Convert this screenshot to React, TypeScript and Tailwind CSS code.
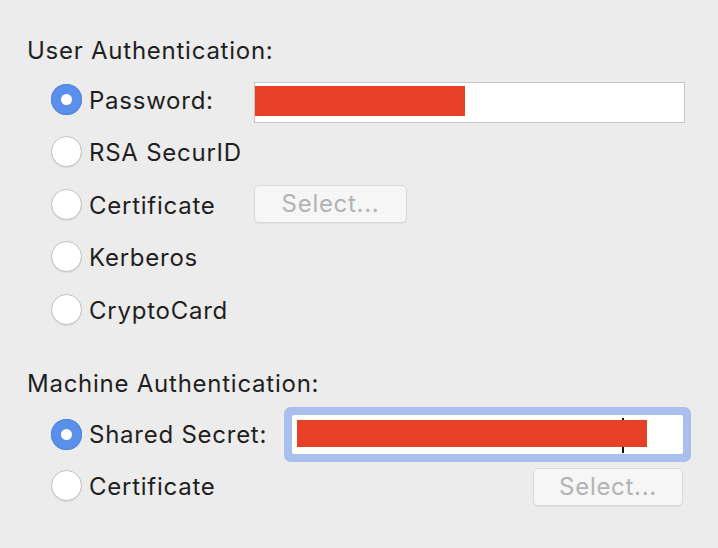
const font = { fontFamily: 'Inter, "Liberation Sans", sans-serif' };

function Radio({ checked }: { checked?: boolean }) {
  if (checked) {
    return (
      <div className="w-[31px] h-[31px] shrink-0 rounded-full bg-[#5b90ea] flex items-center justify-center shadow-[inset_0_0_0_1px_#4f84de]">
        <div className="w-[11px] h-[11px] rounded-full bg-white" />
      </div>
    );
  }
  return (
    <div className="w-[31px] h-[31px] shrink-0 rounded-full bg-white border border-[#c2c2c2] shadow-[0_1px_1px_rgba(0,0,0,0.08)]" />
  );
}

function SelectButton({ width }: { width: string }) {
  return (
    <div
      className={`${width} h-[38px] rounded-[5px] bg-[#f6f6f6] border border-[#dadada] shadow-[0_1px_1px_rgba(0,0,0,0.05)] flex items-center justify-center text-[24px] text-[#b3b3b3] tracking-[0.7px]`}
    >
      Select...
    </div>
  );
}

function Row({ label, checked, children }: { label: string; checked?: boolean; children?: React.ReactNode }) {
  return (
    <div className="h-[52.5px] flex items-center">
      <Radio checked={checked} />
      <div className="w-[172px] pl-[7px] pt-[3px] text-[24px] leading-[28px] text-[#1f1f1f] tracking-[0.75px]">{label}</div>
      {children}
    </div>
  );
}

export default function App() {
  return (
    <div className="w-[718px] h-[548px] bg-[#ececec] pl-[27px] pt-[37px] select-none" style={font}>
      <div className="h-[28px] text-[24px] leading-[28px] text-[#1f1f1f] tracking-[0.75px]">User Authentication:</div>

      <div className="pl-[24px] mt-[7.75px]">
        <Row label="Password:" checked>
          <div className="w-[431px] h-[41px] self-start mt-[9px] bg-white border border-[#c6c6c6] pt-[3px]">
            <div className="w-[210px] h-[30px] bg-[#e84027]" />
          </div>
        </Row>
        <Row label="RSA SecurID" />
        <Row label="Certificate">
          <SelectButton width="w-[153px]" />
        </Row>
        <Row label="Kerberos" />
        <Row label="CryptoCard" />
      </div>

      <div className="h-[28px] mt-[34.75px] text-[24px] leading-[28px] text-[#1f1f1f] tracking-[0.75px]">
        Machine Authentication:
      </div>

      <div className="pl-[24px] mt-[8.5px]">
        <div className="h-[56px] flex items-center">
          <Radio checked />
          <div className="w-[210px] pl-[7px] text-[24px] leading-[28px] text-[#1f1f1f] tracking-[0.75px]">Shared Secret:</div>
          <div className="relative w-[391px] h-[39px] bg-white rounded-[2px] shadow-[0_0_0_8px_#a9bfee] pt-[5px] pl-[5px]">
            <div className="absolute left-[330px] top-[3px] w-[2px] h-[35px] bg-[#111]" />
            <div className="relative w-[350px] h-[27px] bg-[#e84027]" />
          </div>
        </div>
        <div className="h-[45px] flex items-center">
          <Radio />
          <div className="flex-1 pl-[7px] pt-[3px] text-[24px] leading-[28px] text-[#1f1f1f] tracking-[0.75px]">Certificate</div>
          <div className="pr-[35px] pt-[3px]">
            <SelectButton width="w-[150px]" />
          </div>
        </div>
      </div>
    </div>
  );
}
